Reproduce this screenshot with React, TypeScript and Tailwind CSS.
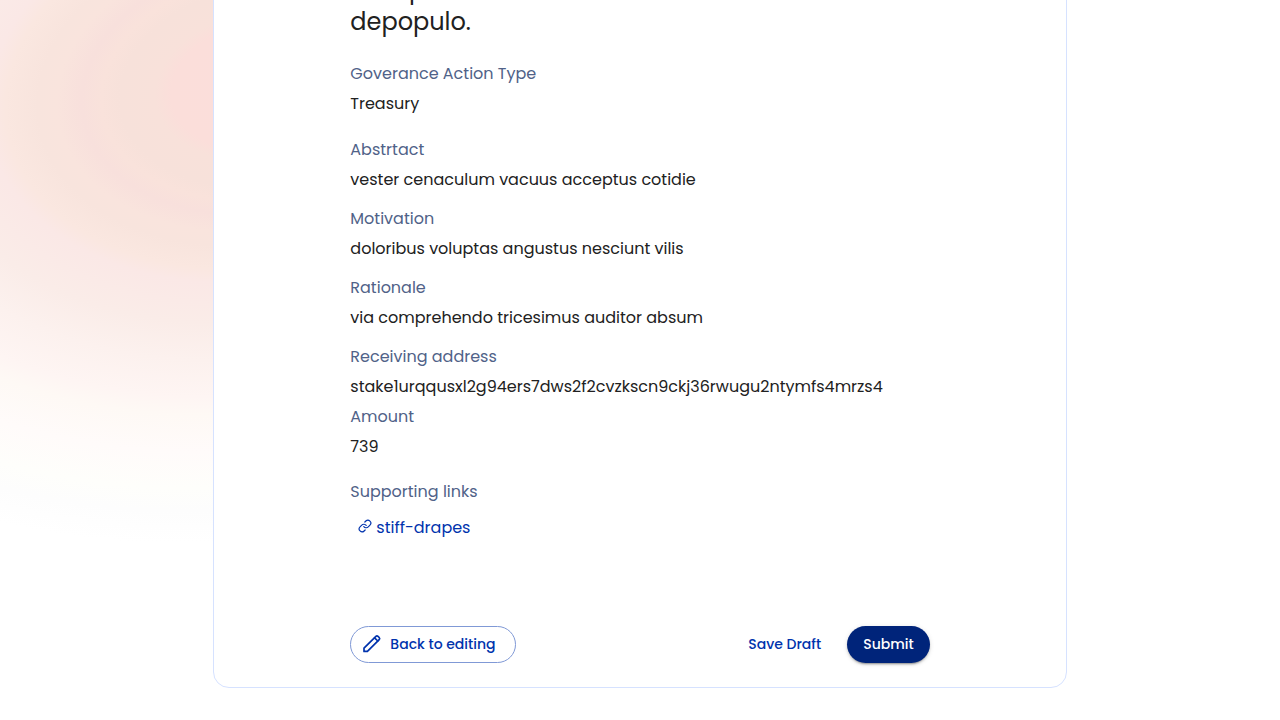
import React from 'react';

type Entry = { label: string; value: string; gap: string };

const entries: Entry[] = [
  { label: 'Goverance Action Type', value: 'Treasury', gap: 'mb-4' },
  { label: 'Abstrtact', value: 'vester cenaculum vacuus acceptus cotidie', gap: 'mb-[9px]' },
  { label: 'Motivation', value: 'doloribus voluptas angustus nesciunt vilis', gap: 'mb-[9px]' },
  { label: 'Rationale', value: 'via comprehendo tricesimus auditor absum', gap: 'mb-[9px]' },
  { label: 'Receiving address', value: 'stake1urqqusxl2g94ers7dws2f2cvzkscn9ckj36rwugu2ntymfs4mrzs4', gap: 'mb-0' },
  { label: 'Amount', value: '739', gap: 'mb-[15px]' },
];

function Glow() {
  return (
    <svg aria-hidden="true" className="pointer-events-none absolute left-0 top-0 -z-10" width="720" height="620" viewBox="0 0 720 620">
      <defs>
        <radialGradient id="glow" gradientUnits="userSpaceOnUse" cx="0" cy="0" r="1" gradientTransform="translate(260 86) rotate(-10) scale(640 450)">
          <stop offset="0" stopColor="#fbdedb" />
          <stop offset="0.14" stopColor="#fbdeda" />
          <stop offset="0.165" stopColor="#f8e1da" />
          <stop offset="0.22" stopColor="#f7e1da" />
          <stop offset="0.25" stopColor="#f9e2db" />
          <stop offset="0.28" stopColor="#f8e0dc" />
          <stop offset="0.32" stopColor="#f9e4dd" />
          <stop offset="0.35" stopColor="#f8e4dd" />
          <stop offset="0.4" stopColor="#fae7e0" />
          <stop offset="0.43" stopColor="#fae8e6" />
          <stop offset="0.52" stopColor="#faece8" />
          <stop offset="0.6" stopColor="#fcf1ee" />
          <stop offset="0.68" stopColor="#fef5f3" />
          <stop offset="0.72" stopColor="#fef9f5" />
          <stop offset="0.8" stopColor="#fffbfa" />
          <stop offset="0.88" stopColor="#fefefb" />
          <stop offset="0.93" stopColor="#fdfdfd" />
          <stop offset="1" stopColor="#ffffff" />
        </radialGradient>
      </defs>
      <rect width="720" height="620" fill="url(#glow)" />
    </svg>
  );
}

function LinkIcon() {
  return (
    <svg aria-hidden="true" className="mb-1" width="14" height="14" viewBox="0 0 24 24" fill="none" stroke="#0033ad" strokeWidth="2" strokeLinecap="round" strokeLinejoin="round">
      <path d="M10 13a5 5 0 0 0 7.54.54l3-3a5 5 0 0 0-7.07-7.07l-1.72 1.71" />
      <path d="M14 11a5 5 0 0 0-7.54-.54l-3 3a5 5 0 0 0 7.07 7.07l1.71-1.71" />
    </svg>
  );
}

function PencilIcon() {
  return (
    <svg aria-hidden="true" width="20" height="20" viewBox="0 0 20 20" fill="none" stroke="#0033ad" strokeWidth="1.7" strokeLinecap="round" strokeLinejoin="round">
      <path d="M2 17.4v-3.2L13.9 2.3a1.5 1.5 0 0 1 2.1 0l1.2 1.2a1.5 1.5 0 0 1 0 2.1L5.4 17.4H2Z" />
      <path d="m12.6 3.8 3.2 3.2" />
    </svg>
  );
}

export default function App() {
  return (
    <main className="relative isolate flex h-screen flex-col items-center justify-end overflow-hidden bg-white pb-8 font-['Poppins','Inter',sans-serif] text-[#212121]">
      <Glow />
      <section className="w-2/3 shrink-0 rounded-2xl border border-[#d6e2ff] bg-white px-[136px] pt-12 pb-6">
        <h1 className="mb-[21px] text-2xl leading-8">
          Tero p
          <br />
          depopulo.
        </h1>
        <dl className="text-base leading-[30px]">
          {entries.map((entry) => (
            <div key={entry.label} className={entry.gap}>
              <dt className="text-[#506288]">{entry.label}</dt>
              <dd>{entry.value}</dd>
            </div>
          ))}
        </dl>
        <h2 className="text-base leading-[30px] text-[#506288]">Supporting links</h2>
        <a href="#stiff-drapes" className="mt-1.5 ml-2 flex w-fit items-center gap-1 text-base leading-[30px] text-[#0033ad]">
          <LinkIcon />
          stiff-drapes
        </a>
        <div className="mt-[83px] flex items-center justify-between text-sm font-medium">
          <button type="button" className="flex h-[37px] items-center gap-2 rounded-full border border-[#8099d6] pr-[19px] pb-px pl-[11px] text-[#0033ad]">
            <PencilIcon />
            Back to editing
          </button>
          <div className="flex items-center gap-2">
            <button type="button" className="h-[37px] rounded-full px-[18px] pb-0.5 text-[#0033ad]">Save Draft</button>
            <button type="button" className="h-[37px] rounded-full bg-[#00247a] px-4 pb-0.5 text-white shadow-[0_3px_1px_-2px_rgba(0,0,0,0.2),0_2px_2px_0_rgba(0,0,0,0.14),0_1px_5px_0_rgba(0,0,0,0.12)]">Submit</button>
          </div>
        </div>
      </section>
    </main>
  );
}
